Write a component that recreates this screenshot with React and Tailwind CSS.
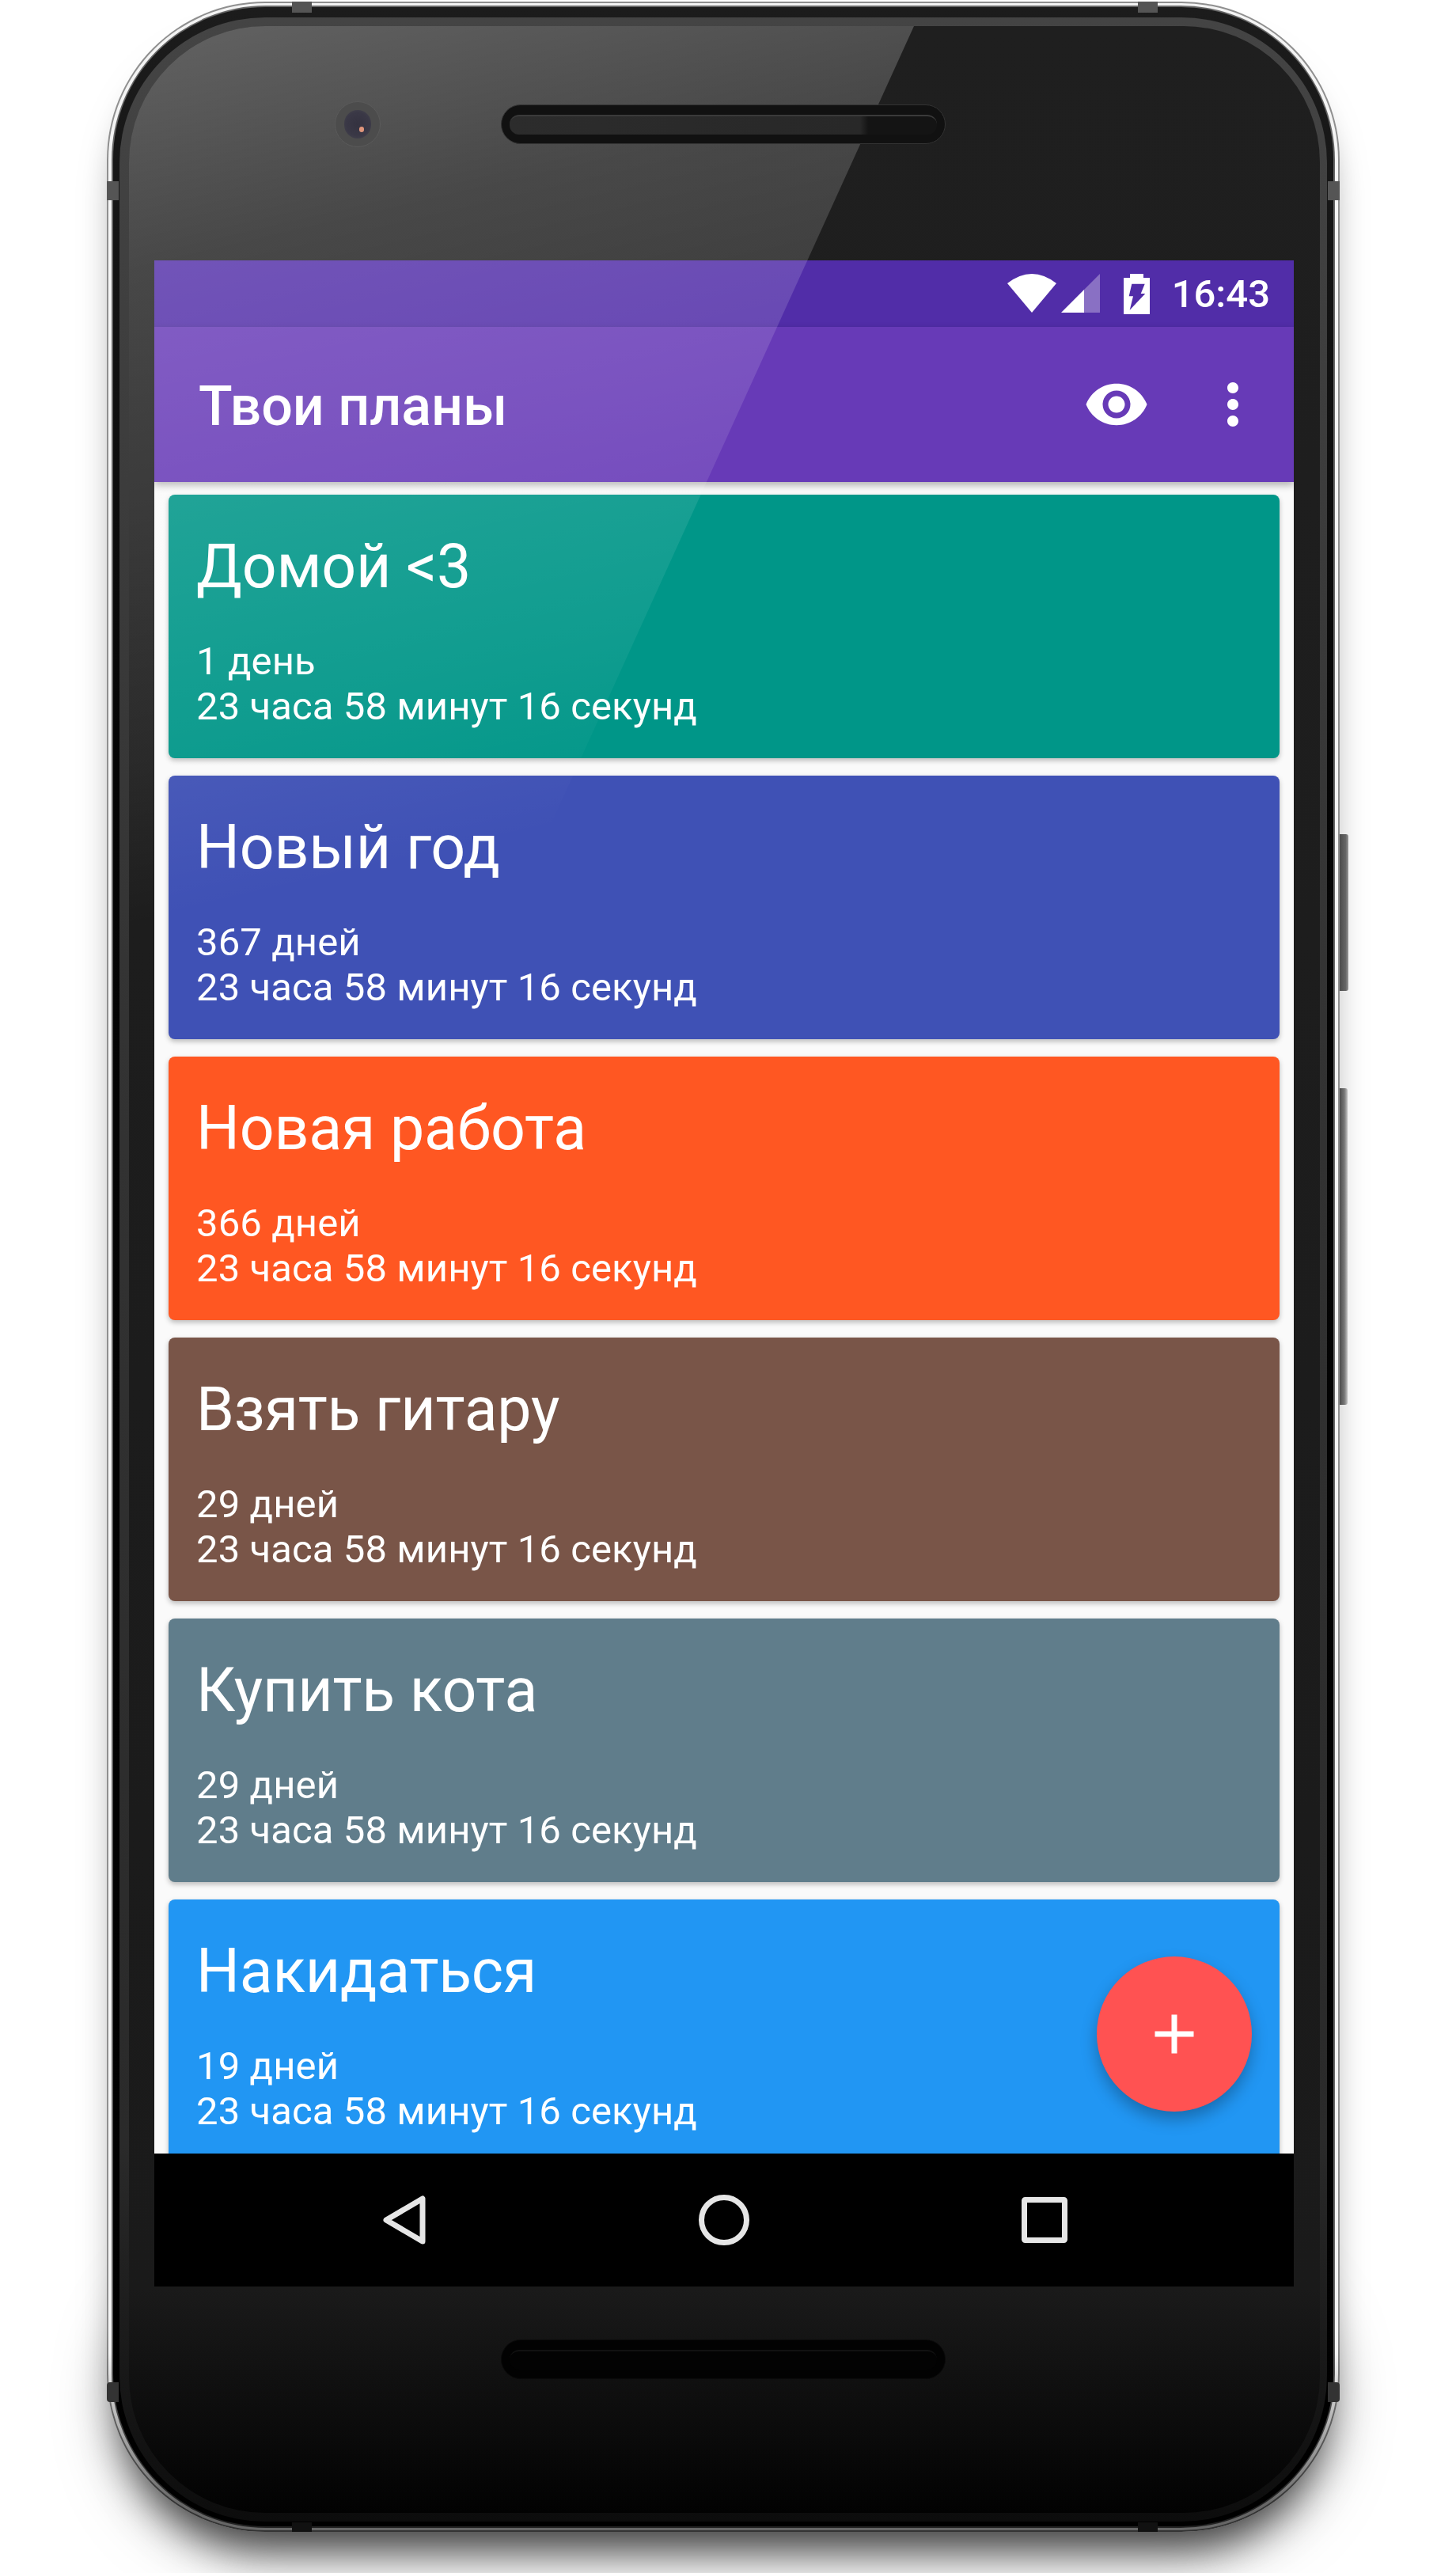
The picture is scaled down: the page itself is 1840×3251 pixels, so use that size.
import { MdVisibility, MdMoreVert, MdAdd } from "react-icons/md";

const plans = [
  { title: "Домой <3", days: "1 день", color: "bg-[#009688]" },
  { title: "Новый год", days: "367 дней", color: "bg-[#3f51b5]" },
  { title: "Новая работа", days: "366 дней", color: "bg-[#ff5722]" },
  { title: "Взять гитару", days: "29 дней", color: "bg-[#795548]" },
  { title: "Купить кота", days: "29 дней", color: "bg-[#607d8b]" },
  { title: "Накидаться", days: "19 дней", color: "bg-[#2196f3]" },
];

function PlanCard({ title, days, color }) {
  return (
    <div className={`${color} h-[333px] shrink-0 rounded-[8px] pl-[35px] pt-[46px] text-white shadow-[0_3px_6px_rgba(0,0,0,0.25)]`}>
      <div className="text-[77px] leading-[90px] tracking-[-0.2px]">{title}</div>
      <div className="mt-[46px] text-[49px] leading-[57px] tracking-[0.1px]">
        <div>{days}</div>
        <div>23 часа 58 минут 16 секунд</div>
      </div>
    </div>
  );
}

function StatusIcons() {
  return (
    <div className="flex items-center">
      <svg width="62" height="49" viewBox="0 0 62 49" className="mt-[-1px]">
        <path d="M0 12 Q31 -12 62 12 L31 49 Z" fill="#fff" />
      </svg>
      <svg width="49" height="49" viewBox="0 0 49 49" className="ml-[6px] mt-[-1px]">
        <polygon points="0,49 29,20 29,49" fill="#fff" />
        <polygon points="29,20 49,0 49,49 29,49" fill="#fff" fillOpacity="0.32" />
      </svg>
      <svg width="33" height="51" viewBox="0 0 33 51" className="ml-[30px]">
        <path
          fillRule="evenodd"
          fill="#fff"
          d="M8 0H25V5H33V51H0V5H8Z M10.3 12.7L26.7 12.7L21.7 25L27.3 25L7.7 45.7L12 28.3L6.7 28.3Z"
        />
      </svg>
    </div>
  );
}

function Speaker({ dark }) {
  if (dark) {
    return (
      <div className="flex h-[50px] w-[562px] items-center rounded-[25px] border border-[#0a0a0a] bg-[#020202] px-[10px]">
        <div className="h-[25px] w-full rounded-[12px] border-t-2 border-[#111] bg-[#030303]" />
      </div>
    );
  }
  return (
    <div className="relative z-30 ml-[152px] flex h-[50px] w-[562px] items-center rounded-[25px] border border-[#333] bg-[#111] px-[10px]">
      <div className="h-[25px] w-full rounded-[12px] border-t-2 border-[#3a3a3a] bg-[linear-gradient(90deg,#2c2c2c_0%,#282828_82%,#141414_84%,#141414_100%)]" />
    </div>
  );
}

function Camera() {
  return (
    <div className="relative z-30 flex h-[58px] w-[58px] items-center justify-center rounded-full border border-[#5a5a5a] bg-[#4c4c4c]">
      <div className="h-[36px] w-[34px] rounded-full bg-[radial-gradient(circle_at_50%_50%,#343240_0%,#3a3846_60%,#4a4a50_100%)]" />
      <div className="absolute left-[30px] top-[31px] h-[7px] w-[6px] rounded-full bg-[#e0967c]" />
    </div>
  );
}

function NavBar() {
  return (
    <div className="flex h-[168px] shrink-0 items-center justify-center gap-[321px] bg-black">
      <svg width="84" height="84" viewBox="0 0 84 84" fill="none" stroke="#e6e6e6" strokeWidth="7" strokeLinejoin="round">
        <polygon points="66,15 66,69 20,42" />
      </svg>
      <svg width="84" height="84" viewBox="0 0 84 84" fill="none" stroke="#e6e6e6" strokeWidth="7">
        <circle cx="42" cy="42" r="28.5" />
      </svg>
      <svg width="84" height="84" viewBox="0 0 84 84" fill="none" stroke="#e6e6e6" strokeWidth="7" strokeLinejoin="round">
        <rect x="16.5" y="16.5" width="51" height="51" rx="1" />
      </svg>
    </div>
  );
}

function Screen() {
  return (
    <div className="relative flex h-[2560px] w-[1440px] flex-col overflow-hidden bg-[#fafafa]">
      <div className="flex h-[84px] shrink-0 items-center justify-end bg-[#512da8] pr-[30px] text-white">
        <StatusIcons />
        <span className="ml-[28px] text-[49px] font-medium leading-none">16:43</span>
      </div>
      <div className="relative z-10 flex h-[196px] shrink-0 items-center bg-[#673ab7] pl-[56px] pr-[35px] text-white shadow-[0_4px_9px_rgba(0,0,0,0.3)]">
        <span className="mt-[4px] flex-1 text-[70px] font-medium">Твои планы</span>
        <MdVisibility size={84} />
        <MdMoreVert size={84} className="ml-[63px]" />
      </div>
      <div className="flex min-h-0 flex-1 flex-col gap-[22px] overflow-hidden px-[18px] pt-[16px]">
        {plans.map((plan) => (
          <PlanCard key={plan.title} {...plan} />
        ))}
      </div>
      <NavBar />
      <div className="absolute bottom-[221px] right-[53px] z-10 flex h-[196px] w-[196px] items-center justify-center rounded-full bg-[#ff5252] text-white shadow-[0_10px_20px_rgba(0,0,0,0.28)]">
        <MdAdd size={84} />
      </div>
    </div>
  );
}

function Phone() {
  return (
    <div className="relative isolate h-[3197px] w-[1558px] rounded-[200px] shadow-[0_40px_50px_-20px_rgba(0,0,0,0.6)]">
      {/* soft shadow around the lower corners */}
      <div className="absolute bottom-[10px] left-[20px] right-[20px] -z-10 h-[360px] rounded-[180px] shadow-[0_24px_80px_rgba(0,0,0,0.5)]" />

      {/* metal rim */}
      <div className="h-full rounded-[200px] bg-[linear-gradient(180deg,#8f8f8f_0%,#8f8f8f_92%,#333_99%)] px-[2px] py-[2px]">
        <div className="h-full rounded-[198px] bg-[linear-gradient(180deg,#f4f4f4_0%,#f4f4f4_93%,#666_99%)] px-[4px] py-[3px]">
          <div className="h-full rounded-[195px] bg-[linear-gradient(180deg,#666_0%,#666_92%,#222_99%)] px-[2px] py-[2px]">
            <div className="h-full rounded-[192px] bg-[linear-gradient(180deg,#1c1c1c_0%,#050505_30%,#000_100%)] pb-[6px] pl-[8px] pr-[8px] pt-[13px]">
              <div className="h-full rounded-[184px] bg-[linear-gradient(180deg,#444_0%,#333_40%,#2a2a2a_85%,#0c0c0c_100%)] pb-[11px] pl-[12px] pr-[9px] pt-[11px]">
                <div className="relative flex h-full flex-col overflow-hidden rounded-[172px] bg-[linear-gradient(180deg,#1f1f1f_0%,#1a1a1a_91%,#020202_100%)]">
                  <div className="flex h-[248px] shrink-0 items-center pl-[260px]">
                    <Camera />
                    <Speaker />
                  </div>
                  <div className="mt-[48px] shrink-0 pl-[32px]">
                    <Screen />
                  </div>
                  <div className="flex h-[180px] items-center pl-[470px] pt-[4px]">
                    <Speaker dark />
                  </div>
                  {/* glass reflection */}
                  <div className="pointer-events-none absolute left-0 top-0 z-20 h-[2180px] w-[992px] bg-[linear-gradient(167deg,rgba(255,255,255,0.3)_0%,rgba(255,255,255,0.185)_12.8%,rgba(255,255,255,0.125)_25.6%,rgba(255,255,255,0.06)_38.3%,rgba(255,255,255,0)_47.3%)] [clip-path:polygon(0_0,100%_0,0_100%)]" />
                </div>
              </div>
            </div>
          </div>
        </div>
      </div>

      {/* antenna bands */}
      <div className="absolute left-[234px] top-0 h-[14px] w-[25px] bg-[#555]" />
      <div className="absolute left-[1303px] top-0 h-[14px] w-[25px] bg-[#555]" />
      <div className="absolute left-0 top-[227px] h-[24px] w-[15px] bg-[#555]" />
      <div className="absolute right-0 top-[227px] h-[24px] w-[15px] bg-[#555]" />
      <div className="absolute left-0 top-[3008px] h-[25px] w-[15px] rounded-l-[4px] bg-[#333]" />
      <div className="absolute right-0 top-[3008px] h-[25px] w-[15px] rounded-r-[4px] bg-[#333]" />
      <div className="absolute bottom-0 left-[234px] h-[12px] w-[25px] bg-[#111]" />
      <div className="absolute bottom-0 left-[1303px] h-[12px] w-[25px] bg-[#111]" />

      {/* side buttons */}
      <div className="absolute left-full top-[1052px] h-[198px] w-[11px] rounded-r-[3px] bg-[linear-gradient(90deg,#4c4c4c_0%,#666_70%,#999_100%)]" />
      <div className="absolute left-full top-[1373px] h-[400px] w-[10px] rounded-r-[3px] bg-[linear-gradient(90deg,#4c4c4c_0%,#777_60%,#c4c4c4_100%)]" />
    </div>
  );
}

export default function App() {
  return (
    <div className="h-[3251px] w-[1840px] overflow-hidden bg-white pl-[135px] pt-[2px] [font-family:Roboto,sans-serif]">
      <Phone />
    </div>
  );
}
